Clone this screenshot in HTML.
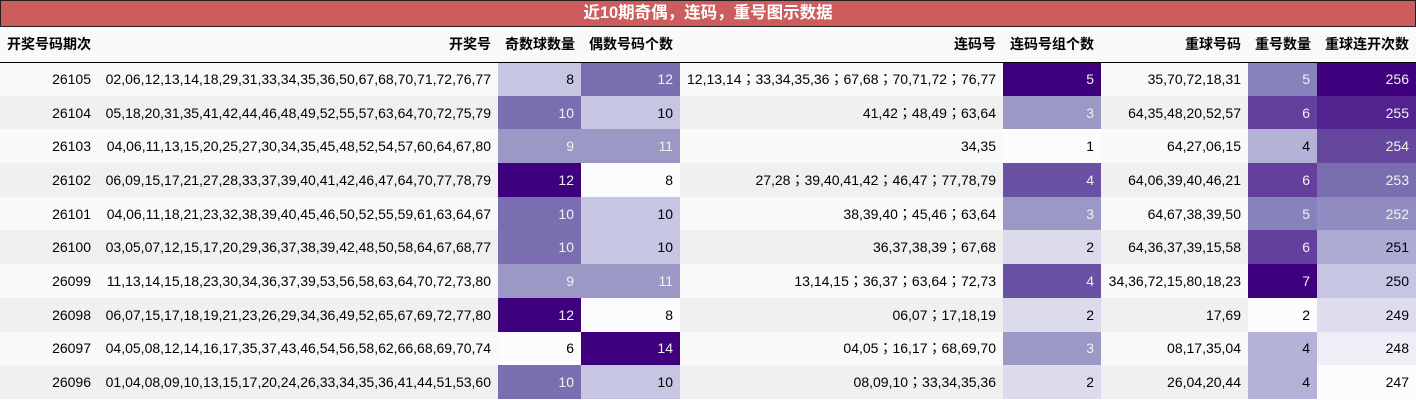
<!DOCTYPE html>
<html><head><meta charset="utf-8"><style>
*{margin:0;padding:0;box-sizing:border-box}
body{width:1416px;height:400px;overflow:hidden;background:#fff;font-family:"Liberation Sans","Noto Sans CJK SC",sans-serif;font-size:14px;color:#000}
.title{height:27px;background:#cd5c5c;border:1px solid #222;color:#fff;font-weight:bold;font-size:16.5px;text-align:center;line-height:25px}
table{border-collapse:collapse;table-layout:fixed;width:1416px}
td,th{text-align:right;padding:0 7px;white-space:nowrap;overflow:hidden}
th{height:35px;background:#f9f9f9;font-weight:bold;border-bottom:1px solid #000}
th.l{text-align:left}
td{height:33.7px}
tr.o td{background:#f9f9f9}
tr.e td{background:#f0f0f0}
td.w{color:#f1f1f1}
s{text-decoration:none;font-family:"Noto Sans CJK TC",sans-serif}
</style></head><body>
<div class="title">近10期奇偶，连码，重号图示数据</div>
<table>
<colgroup><col style="width:98px"><col style="width:400px"><col style="width:83px"><col style="width:99px"><col style="width:323px"><col style="width:98px"><col style="width:147px"><col style="width:69px"><col style="width:99px"></colgroup>
<tr><th class="l">开奖号码期次</th><th>开奖号</th><th>奇数球数量</th><th>偶数号码个数</th><th>连码号</th><th>连码号组个数</th><th>重球号码</th><th>重号数量</th><th>重球连开次数</th></tr>
<tr class="o"><td>26105</td><td>02,06,12,13,14,18,29,31,33,34,35,36,50,67,68,70,71,72,76,77</td><td style="background:#c6c6e2!important">8</td><td class="w" style="background:#7a6eb1!important">12</td><td>12,13,14<s>；</s>33,34,35,36<s>；</s>67,68<s>；</s>70,71,72<s>；</s>76,77</td><td class="w" style="background:#3f007d!important">5</td><td>35,70,72,18,31</td><td class="w" style="background:#8682bc!important">5</td><td class="w" style="background:#3f007d!important">256</td></tr>
<tr class="e"><td>26104</td><td>05,18,20,31,35,41,42,44,46,48,49,52,55,57,63,64,70,72,75,79</td><td class="w" style="background:#7a6eb1!important">10</td><td style="background:#c6c6e2!important">10</td><td>41,42<s>；</s>48,49<s>；</s>63,64</td><td class="w" style="background:#9c98c6!important">3</td><td>64,35,48,20,52,57</td><td class="w" style="background:#643f9d!important">6</td><td class="w" style="background:#52238f!important">255</td></tr>
<tr class="o"><td>26103</td><td>04,06,11,13,15,20,25,27,30,34,35,45,48,52,54,57,60,64,67,80</td><td class="w" style="background:#9c98c6!important">9</td><td class="w" style="background:#9c98c6!important">11</td><td>34,35</td><td style="background:#fcfbfd!important">1</td><td>64,27,06,15</td><td style="background:#b4b3d7!important">4</td><td class="w" style="background:#65479e!important">254</td></tr>
<tr class="e"><td>26102</td><td>06,09,15,17,21,27,28,33,37,39,40,41,42,46,47,64,70,77,78,79</td><td class="w" style="background:#3f007d!important">12</td><td style="background:#fcfbfd!important">8</td><td>27,28<s>；</s>39,40,41,42<s>；</s>46,47<s>；</s>77,78,79</td><td class="w" style="background:#6a51a3!important">4</td><td>64,06,39,40,46,21</td><td class="w" style="background:#643f9d!important">6</td><td class="w" style="background:#7a6eb1!important">253</td></tr>
<tr class="o"><td>26101</td><td>04,06,11,18,21,23,32,38,39,40,45,46,50,52,55,59,61,63,64,67</td><td class="w" style="background:#7a6eb1!important">10</td><td style="background:#c6c6e2!important">10</td><td>38,39,40<s>；</s>45,46<s>；</s>63,64</td><td class="w" style="background:#9c98c6!important">3</td><td>64,67,38,39,50</td><td class="w" style="background:#8682bc!important">5</td><td class="w" style="background:#918dc2!important">252</td></tr>
<tr class="e"><td>26100</td><td>03,05,07,12,15,17,20,29,36,37,38,39,42,48,50,58,64,67,68,77</td><td class="w" style="background:#7a6eb1!important">10</td><td style="background:#c6c6e2!important">10</td><td>36,37,38,39<s>；</s>67,68</td><td style="background:#dcdbec!important">2</td><td>64,36,37,39,15,58</td><td class="w" style="background:#643f9d!important">6</td><td style="background:#adabd2!important">251</td></tr>
<tr class="o"><td>26099</td><td>11,13,14,15,18,23,30,34,36,37,39,53,56,58,63,64,70,72,73,80</td><td class="w" style="background:#9c98c6!important">9</td><td class="w" style="background:#9c98c6!important">11</td><td>13,14,15<s>；</s>36,37<s>；</s>63,64<s>；</s>72,73</td><td class="w" style="background:#6a51a3!important">4</td><td>34,36,72,15,80,18,23</td><td class="w" style="background:#3f007d!important">7</td><td style="background:#c6c6e2!important">250</td></tr>
<tr class="e"><td>26098</td><td>06,07,15,17,18,19,21,23,26,29,34,36,49,52,65,67,69,72,77,80</td><td class="w" style="background:#3f007d!important">12</td><td style="background:#fcfbfd!important">8</td><td>06,07<s>；</s>17,18,19</td><td style="background:#dcdbec!important">2</td><td>17,69</td><td style="background:#fcfbfd!important">2</td><td style="background:#dedded!important">249</td></tr>
<tr class="o"><td>26097</td><td>04,05,08,12,14,16,17,35,37,43,46,54,56,58,62,66,68,69,70,74</td><td style="background:#fcfbfd!important">6</td><td class="w" style="background:#3f007d!important">14</td><td>04,05<s>；</s>16,17<s>；</s>68,69,70</td><td class="w" style="background:#9c98c6!important">3</td><td>08,17,35,04</td><td style="background:#b4b3d7!important">4</td><td style="background:#efedf5!important">248</td></tr>
<tr class="e"><td>26096</td><td>01,04,08,09,10,13,15,17,20,24,26,33,34,35,36,41,44,51,53,60</td><td class="w" style="background:#7a6eb1!important">10</td><td style="background:#c6c6e2!important">10</td><td>08,09,10<s>；</s>33,34,35,36</td><td style="background:#dcdbec!important">2</td><td>26,04,20,44</td><td style="background:#b4b3d7!important">4</td><td style="background:#fcfbfd!important">247</td></tr>
</table>
</body></html>
